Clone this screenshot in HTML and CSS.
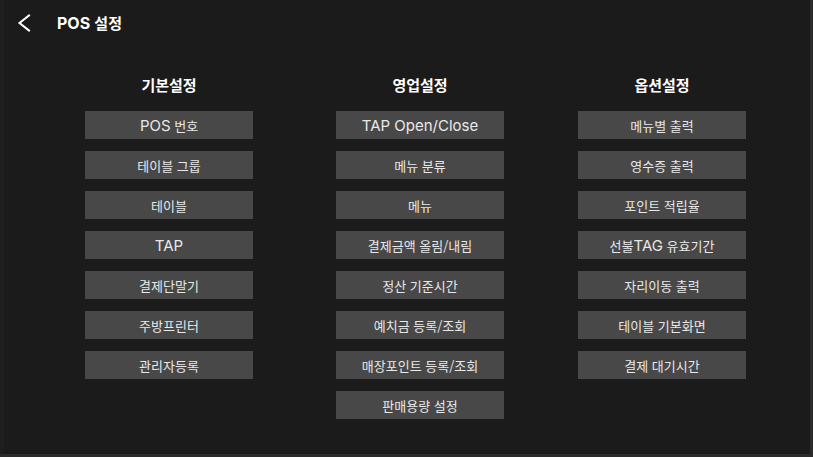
FILE: index.html
```html
<!DOCTYPE html>
<html lang="ko">
<head>
<meta charset="utf-8">
<title>POS 설정</title>
<link rel="stylesheet" href="styles.css">
</head>
<body>
<div class="screen">
  <header class="topbar">
    <button class="back" aria-label="뒤로">
      <svg width="14" height="18" viewBox="0 0 14 18"><path d="M12 1.5 L2.5 9 L12 16.5" fill="none" stroke="#ffffff" stroke-width="2" stroke-linecap="square" stroke-linejoin="miter"/></svg>
    </button>
    <h1 class="title"><span class="en">POS</span> 설정</h1>
  </header>
  <main class="columns">
    <section class="col col-1">
      <h2 class="col-title">기본설정</h2>
      <ul class="menu">
        <li class="item"><span class="en">POS</span>&nbsp;번호</li>
        <li class="item">테이블 그룹</li>
        <li class="item">테이블</li>
        <li class="item"><span class="en">TAP</span></li>
        <li class="item">결제단말기</li>
        <li class="item">주방프린터</li>
        <li class="item">관리자등록</li>
      </ul>
    </section>
    <section class="col col-2">
      <h2 class="col-title">영업설정</h2>
      <ul class="menu">
        <li class="item"><span class="en">TAP Open/Close</span></li>
        <li class="item">메뉴 분류</li>
        <li class="item">메뉴</li>
        <li class="item">결제금액 올림/내림</li>
        <li class="item">정산 기준시간</li>
        <li class="item">예치금 등록/조회</li>
        <li class="item">매장포인트 등록/조회</li>
        <li class="item">판매용량 설정</li>
      </ul>
    </section>
    <section class="col col-3">
      <h2 class="col-title">옵션설정</h2>
      <ul class="menu">
        <li class="item">메뉴별 출력</li>
        <li class="item">영수증 출력</li>
        <li class="item">포인트 적립율</li>
        <li class="item">선불<span class="en">TAG</span>&nbsp;유효기간</li>
        <li class="item">자리이동 출력</li>
        <li class="item">테이블 기본화면</li>
        <li class="item">결제 대기시간</li>
      </ul>
    </section>
  </main>
</div>
</body>
</html>
```
FILE: styles.css
```css
* { box-sizing: border-box; }
html, body {
  margin: 0;
  padding: 0;
  width: 813px;
  height: 457px;
  overflow: hidden;
  background: #2b2b2b;
  font-family: "Noto Sans CJK KR", sans-serif;
}
.screen {
  width: 810px;
  height: 454px;
  background: #1b1b1b;
  border-left: 4px solid #1f1f1f;
}
.en {
  font-family: Inter, "Noto Sans CJK KR", sans-serif;
  font-size: 15px;
}
.topbar {
  display: flex;
  align-items: center;
  height: 46px;
  padding-left: 13px;
}
.back {
  width: 14px;
  height: 18px;
  padding: 0;
  margin: 0;
  border: 0;
  background: transparent;
  display: flex;
  align-items: center;
  justify-content: center;
}
.back svg { display: block; }
.title {
  margin: 0 0 0 26px;
  font-size: 15px;
  font-weight: 700;
  color: #ffffff;
  line-height: 1;
  letter-spacing: 0;
}
.title .en { font-size: 16px; }
.columns {
  display: flex;
  padding-left: 81px;
  padding-top: 29px;
}
.col {
  width: 168px;
  display: flex;
  flex-direction: column;
}
.col-2 { margin-left: 83px; }
.col-3 { margin-left: 74px; }
.col-title {
  margin: 0;
  height: 36px;
  font-size: 15px;
  font-weight: 700;
  color: #ffffff;
  text-align: center;
  line-height: 20px;
}
.menu {
  list-style: none;
  margin: 0;
  padding: 0;
  display: flex;
  flex-direction: column;
  gap: 12px;
}
.item {
  height: 28px;
  background: #484848;
  color: #e8e8e8;
  font-size: 13px;
  display: flex;
  align-items: center;
  justify-content: center;
  line-height: 1;
  white-space: pre;
}
```
